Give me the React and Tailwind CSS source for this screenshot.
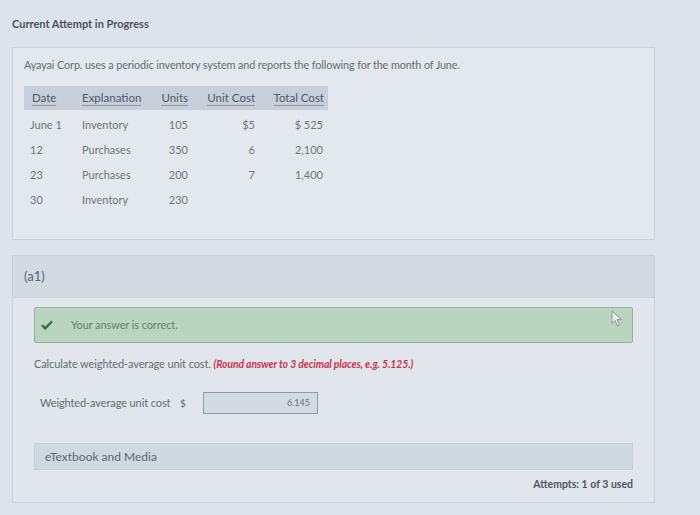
import React from 'react';

const rows = [
    { date: 'June 1', exp: 'Inventory', units: '105', unit: '$5', total: '$ 525' },
    { date: '12', exp: 'Purchases', units: '350', unit: '6', total: '2,100' },
    { date: '23', exp: 'Purchases', units: '200', unit: '7', total: '1,400' },
    { date: '30', exp: 'Inventory', units: '230', unit: '', total: '' },
];

const cols = 'grid grid-cols-[48px_78px_44px_67px_67px]';

export default function App() {
    return (
        <div className="w-[700px] h-[515px] overflow-hidden bg-[#dce3ea] text-[#646b75] pl-[12px] pt-[16px]" style={{ fontFamily: 'Lato, "Open Sans", sans-serif' }}>
            <div className="w-[643px]">
                <h1 className="text-[11px] font-bold text-[#4b525c] h-[15px] leading-[15px]">Current Attempt in Progress</h1>

                {/* Question panel */}
                <div className="mt-[16px] h-[193px] bg-[#e3e8ee] border border-[#cad1d9] pt-[10px] pl-[11px]">
                    <p className="text-[10.8px] leading-[14px] tracking-[-0.1px]">
                        Ayayai Corp. uses a periodic inventory system and reports the following for the month of June.
                    </p>

                    <div className="mt-[14px] w-[304px] text-[11.5px]">
                        <div className={`${cols} h-[24px] items-center bg-[#c7d0da] text-[#4f5866]`}>
                            <div className="pl-[8px]"><span className="border-b border-[#8d98a6] pb-[1px]">Date</span></div>
                            <div className="pl-[10px]"><span className="border-b border-[#8d98a6] pb-[1px]">Explanation</span></div>
                            <div className="text-right pr-[6px]"><span className="border-b border-[#8d98a6] pb-[1px]">Units</span></div>
                            <div className="text-right pr-[6px]"><span className="border-b border-[#8d98a6] pb-[1px]">Unit Cost</span></div>
                            <div className="text-right pr-[4px]"><span className="border-b border-[#8d98a6] pb-[1px]">Total Cost</span></div>
                        </div>
                        <div className="pt-[3px] text-[11px] text-[#6e7580]">
                            {rows.map((r) => (
                                <div key={r.date} className={`${cols} h-[25px] items-center`}>
                                    <div className="pl-[6px]">{r.date}</div>
                                    <div className="pl-[10px]">{r.exp}</div>
                                    <div className="text-right pr-[6px]">{r.units}</div>
                                    <div className="text-right pr-[6px]">{r.unit}</div>
                                    <div className="text-right pr-[5px]">{r.total}</div>
                                </div>
                            ))}
                        </div>
                    </div>
                </div>

                {/* Part a1 */}
                <div className="mt-[15px] h-[43px] bg-[#d3dae2] border border-[#c9d0d8] flex items-center pl-[11px]">
                    <span className="text-[13px] text-[#5d6573]">(a1)</span>
                </div>

                <div className="relative h-[205px] bg-[#e0e6ec] border border-t-0 border-[#c9d0d8] px-[21px] pt-[9px]">
                    <div className="h-[36px] bg-[#bad5bf] border border-[#93b19b] rounded-[2px] flex items-center pl-[6px] gap-[18px]">
                        <svg width="12" height="10" viewBox="0 0 12 10">
                            <path d="M1 5.2 L4.2 8.4 L11 1.4" fill="none" stroke="#3f6e4a" strokeWidth="2.4" />
                        </svg>
                        <span className="text-[11px] text-[#6b7c74] tracking-[-0.1px]">Your answer is correct.</span>
                    </div>

                    <svg className="absolute left-[598px] top-[12px]" width="12" height="17" viewBox="0 0 12 17">
                        <path d="M1 1 L1 13.5 L4 10.5 L6.5 16 L8.5 15 L6 9.6 L10.5 9.6 Z" fill="#e7eee9" stroke="#8a968e" strokeWidth="1" strokeLinejoin="round" />
                    </svg>

                    <p className="mt-[14px] text-[11px] leading-[14px] tracking-[-0.1px]">
                        Calculate weighted-average unit cost.{' '}
                        <span className="italic font-bold text-[10.4px] text-[#c8344c]">(Round answer to 3 decimal places, e.g. 5.125.)</span>
                    </p>

                    <div className="mt-[21px] flex items-center pl-[6px] h-[22px]">
                        <span className="w-[140px] text-[11px] tracking-[-0.1px]">Weighted-average unit cost</span>
                        <span className="w-[23px] text-[10px]">$</span>
                        <div className="w-[115px] h-[22px] bg-[#d2dbe2] border border-[#8f9ba7] flex items-center justify-end pr-[7px] text-[9px] text-[#6b737c]">
                            6.145
                        </div>
                    </div>

                    <div className="mt-[29px] h-[27px] bg-[#d0d8e0] border border-[#c6ced7] flex items-center pl-[10px]">
                        <span className="text-[12px] text-[#5e6672]">eTextbook and Media</span>
                    </div>

                    <div className="mt-[7px] text-right text-[10.5px] font-bold text-[#4f5663]">Attempts: 1 of 3 used</div>
                </div>
            </div>
        </div>
    );
}
